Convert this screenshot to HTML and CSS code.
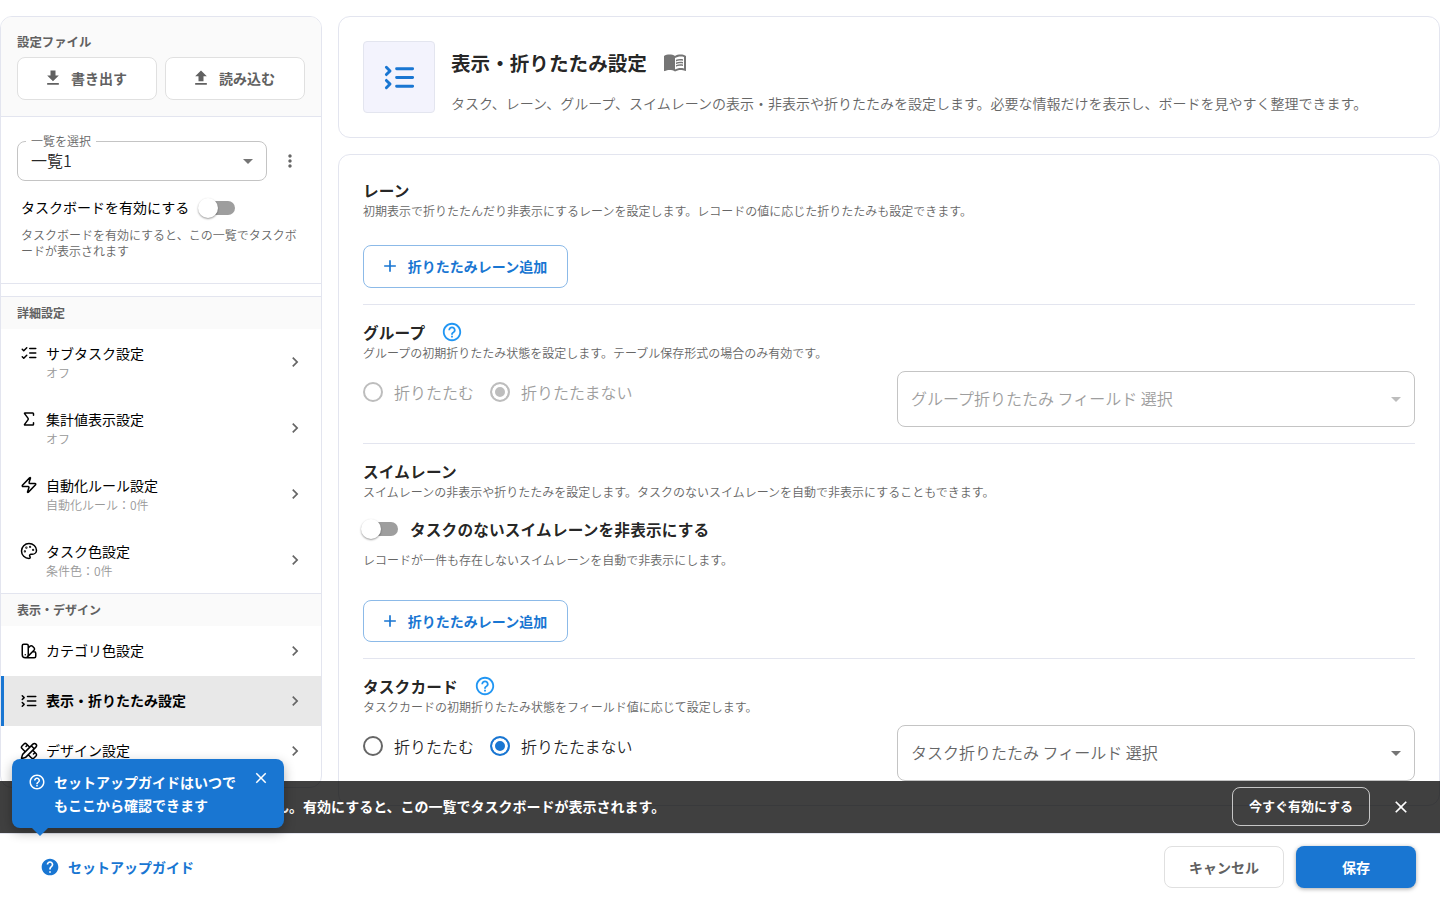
FILE: index.html
```html
<!DOCTYPE html>
<html lang="ja">
<head>
  <meta charset="UTF-8">
  <title>表示・折りたたみ設定</title>
  <link rel="stylesheet" href="styles.css">
</head>
<body>

<!-- Icons -->
<svg class="sprite" width="0" height="0">
  <symbol id="download" viewBox="0 0 24 24"><path d="M5 20h14v-2H5v2zM19 9h-4V3H9v6H5l7 7 7-7z"/></symbol>
  <symbol id="upload" viewBox="0 0 24 24"><path d="M5 20h14v-2H5zm0-10h4v6h6v-6h4l-7-7z"/></symbol>
  <symbol id="more" viewBox="0 0 24 24"><path d="M12 8c1.1 0 2-.9 2-2s-.9-2-2-2-2 .9-2 2 .9 2 2 2zm0 2c-1.1 0-2 .9-2 2s.9 2 2 2 2-.9 2-2-.9-2-2-2zm0 6c-1.1 0-2 .9-2 2s.9 2 2 2 2-.9 2-2-.9-2-2-2z"/></symbol>
  <symbol id="drop" viewBox="0 0 24 24"><path d="m7 10 5 5 5-5z"/></symbol>
  <symbol id="chevron" viewBox="0 0 24 24"><path d="M10 6 8.59 7.41 13.17 12l-4.58 4.59L10 18l6-6z"/></symbol>
  <symbol id="add" viewBox="0 0 24 24"><path d="M19 13h-6v6h-2v-6H5v-2h6V5h2v6h6z"/></symbol>
  <symbol id="close" viewBox="0 0 24 24"><path d="M19 6.41 17.59 5 12 10.59 6.41 5 5 6.41 10.59 12 5 17.59 6.41 19 12 13.41 17.59 19 19 17.59 13.41 12z"/></symbol>
  <symbol id="help-outline" viewBox="0 0 24 24"><path d="M11 18h2v-2h-2v2zm1-16C6.48 2 2 6.48 2 12s4.48 10 10 10 10-4.48 10-10S17.52 2 12 2zm0 18c-4.41 0-8-3.59-8-8s3.59-8 8-8 8 3.59 8 8-3.59 8-8 8zm0-14c-2.21 0-4 1.79-4 4h2c0-1.1.9-2 2-2s2 .9 2 2c0 2-3 1.75-3 5h2c0-2.25 3-2.5 3-5 0-2.21-1.79-4-4-4z"/></symbol>
  <symbol id="help" viewBox="0 0 24 24"><path d="M12 2C6.48 2 2 6.48 2 12s4.48 10 10 10 10-4.48 10-10S17.52 2 12 2zm1 17h-2v-2h2v2zm2.07-7.75l-.9.92C13.45 12.9 13 13.5 13 15h-2v-.5c0-1.1.45-2.1 1.17-2.83l1.24-1.26c.37-.36.59-.86.59-1.41 0-1.1-.9-2-2-2s-2 .9-2 2H8c0-2.21 1.79-4 4-4s4 1.79 4 4c0 .88-.36 1.68-.93 2.25z"/></symbol>
  <symbol id="book" viewBox="0 0 24 24">
    <path d="M21 5c-1.11-.35-2.33-.5-3.5-.5-1.95 0-4.05.4-5.5 1.5-1.45-1.1-3.55-1.5-5.5-1.5S2.45 4.9 1 6v14.65c0 .25.25.5.5.5.1 0 .15-.05.25-.05C3.1 20.45 5.05 20 6.5 20c1.95 0 4.05.4 5.5 1.5 1.35-.85 3.8-1.5 5.5-1.5 1.65 0 3.35.3 4.75 1.05.1.05.15.05.25.05.25 0 .5-.25.5-.5V6c-.6-.45-1.25-.75-2-1zm0 13.5c-1.1-.35-2.3-.5-3.5-.5-1.7 0-4.15.65-5.5 1.5V8c1.35-.85 3.8-1.5 5.5-1.5 1.2 0 2.4.15 3.5.5v11.5z"/>
    <path d="M17.5 10.5c.88 0 1.73.09 2.5.26V9.24c-.79-.15-1.64-.24-2.5-.24-1.7 0-3.24.29-4.5.83v1.66c1.13-.64 2.7-.99 4.5-.99zM13 12.49v1.66c1.13-.64 2.7-.99 4.5-.99.88 0 1.73.09 2.5.26V11.9c-.79-.15-1.64-.24-2.5-.24-1.7 0-3.24.3-4.5.83zM17.5 14.33c-1.7 0-3.24.29-4.5.83v1.66c1.13-.64 2.7-.99 4.5-.99.88 0 1.73.09 2.5.26v-1.52c-.79-.16-1.64-.24-2.5-.24z"/>
  </symbol>
  <symbol id="list-checks" viewBox="0 0 24 24"><path d="m3 17 2 2 4-4M3 7l2 2 4-4M13 6h8M13 12h8M13 18h8"/></symbol>
  <symbol id="sigma" viewBox="0 0 24 24"><path d="M18 7V5a1 1 0 0 0-1-1H6.5a.5.5 0 0 0-.4.8l4.5 6a2 2 0 0 1 0 2.4l-4.5 6a.5.5 0 0 0 .4.8H17a1 1 0 0 0 1-1v-2"/></symbol>
  <symbol id="zap" viewBox="0 0 24 24"><path d="M4 14a1 1 0 0 1-.78-1.63l9.9-10.2a.5.5 0 0 1 .86.46l-1.92 6.02A1 1 0 0 0 13 10h7a1 1 0 0 1 .78 1.63l-9.9 10.2a.5.5 0 0 1-.86-.46l1.92-6.02A1 1 0 0 0 11 14z"/></symbol>
  <symbol id="palette" viewBox="0 0 24 24">
    <circle cx="13.5" cy="6.5" r=".5"/><circle cx="17.5" cy="10.5" r=".5"/><circle cx="8.5" cy="7.5" r=".5"/><circle cx="6.5" cy="12.5" r=".5"/>
    <path d="M12 2C6.5 2 2 6.5 2 12s4.5 10 10 10c.926 0 1.648-.746 1.648-1.688 0-.437-.18-.835-.437-1.125-.29-.289-.438-.652-.438-1.125a1.64 1.64 0 0 1 1.668-1.668h1.996c3.051 0 5.555-2.503 5.555-5.554C21.965 6.012 17.461 2 12 2z"/>
  </symbol>
  <symbol id="swatch" viewBox="0 0 24 24"><path d="M11 17a4 4 0 0 1-8 0V5a2 2 0 0 1 2-2h4a2 2 0 0 1 2 2ZM16.7 13H19a2 2 0 0 1 2 2v4a2 2 0 0 1-2 2H7M7 17h.01M11 8l2.3-2.3a2.4 2.4 0 0 1 3.404.004L18.6 7.6a2.4 2.4 0 0 1 .026 3.434L9.9 19.8"/></symbol>
  <symbol id="list-collapse" viewBox="0 0 24 24"><path d="m3 10 2.5-2.5L3 5M3 19l2.5-2.5L3 14M10 6h11M10 12h11M10 18h11"/></symbol>
  <symbol id="pencil-ruler" viewBox="0 0 24 24"><path d="M13 7 8.7 2.7a2.41 2.41 0 0 0-3.4 0L2.7 5.3a2.41 2.41 0 0 0 0 3.4L7 13M8 6l2-2M18 16l2-2M17 11l4.3 4.3c.94.94.94 2.46 0 3.4l-2.6 2.6c-.94.94-2.46.94-3.4 0L11 17M21.174 6.812a1 1 0 0 0-3.986-3.987L3.842 16.174a2 2 0 0 0-.5.83l-1.321 4.352a.5.5 0 0 0 .623.622l4.353-1.32a2 2 0 0 0 .83-.497zM15 5l4 4"/></symbol>
</svg>

<div class="layout">
  <aside class="sidebar">
    <div class="file-box">
      <div class="file-label">設定ファイル</div>
      <div class="file-buttons">
        <button class="btn btn-gray btn-icon"><svg class="icon s20"><use href="#download"/></svg>書き出す</button>
        <button class="btn btn-gray btn-icon"><svg class="icon s20"><use href="#upload"/></svg>読み込む</button>
      </div>
    </div>

    <div class="view-box">
      <div class="view-row">
        <div class="select select-small">
          <span class="select-label">一覧を選択</span>
          <span class="select-value">一覧1</span>
          <svg class="icon s24"><use href="#drop"/></svg>
        </div>
        <svg class="icon s20 more"><use href="#more"/></svg>
      </div>
      <div class="enable-row">
        <span class="enable-label">タスクボードを有効にする</span>
        <span class="switch"></span>
      </div>
      <p class="enable-note">タスクボードを有効にすると、この一覧でタスクボードが表示されます</p>
    </div>

    <nav>
      <div class="nav-title">詳細設定</div>
      <a class="nav-item tall">
        <svg class="line s18"><use href="#list-checks"/></svg>
        <div class="nav-text">サブタスク設定<small>オフ</small></div>
        <svg class="icon s20"><use href="#chevron"/></svg>
      </a>
      <a class="nav-item tall">
        <svg class="line s18"><use href="#sigma"/></svg>
        <div class="nav-text">集計値表示設定<small>オフ</small></div>
        <svg class="icon s20"><use href="#chevron"/></svg>
      </a>
      <a class="nav-item tall">
        <svg class="line s18"><use href="#zap"/></svg>
        <div class="nav-text">自動化ルール設定<small>自動化ルール：0件</small></div>
        <svg class="icon s20"><use href="#chevron"/></svg>
      </a>
      <a class="nav-item tall">
        <svg class="line s18"><use href="#palette"/></svg>
        <div class="nav-text">タスク色設定<small>条件色：0件</small></div>
        <svg class="icon s20"><use href="#chevron"/></svg>
      </a>
      <div class="nav-title">表示・デザイン</div>
      <a class="nav-item">
        <svg class="line s18"><use href="#swatch"/></svg>
        <div class="nav-text">カテゴリ色設定</div>
        <svg class="icon s20"><use href="#chevron"/></svg>
      </a>
      <a class="nav-item active">
        <svg class="line s18"><use href="#list-collapse"/></svg>
        <div class="nav-text">表示・折りたたみ設定</div>
        <svg class="icon s20"><use href="#chevron"/></svg>
      </a>
      <a class="nav-item">
        <svg class="line s18"><use href="#pencil-ruler"/></svg>
        <div class="nav-text">デザイン設定</div>
        <svg class="icon s20"><use href="#chevron"/></svg>
      </a>
    </nav>
  </aside>

  <main class="main">
    <header class="card page-header">
      <div class="header-icon"><svg class="line"><use href="#list-collapse"/></svg></div>
      <div>
        <h1>表示・折りたたみ設定<svg class="icon s24"><use href="#book"/></svg></h1>
        <p>タスク、レーン、グループ、スイムレーンの表示・非表示や折りたたみを設定します。必要な情報だけを表示し、ボードを見やすく整理できます。</p>
      </div>
    </header>

    <div class="card settings">
      <section>
        <h2>レーン</h2>
        <p class="desc">初期表示で折りたたんだり非表示にするレーンを設定します。レコードの値に応じた折りたたみも設定できます。</p>
        <button class="btn btn-blue btn-icon first"><svg class="icon s20"><use href="#add"/></svg>折りたたみレーン追加</button>
      </section>

      <section>
        <h2>グループ<svg class="icon s22"><use href="#help-outline"/></svg></h2>
        <p class="desc">グループの初期折りたたみ状態を設定します。テーブル保存形式の場合のみ有効です。</p>
        <div class="fields disabled">
          <div class="radios">
            <span class="radio"></span>折りたたむ
            <span class="radio checked"></span>折りたたまない
          </div>
          <div class="select">
            <span class="select-value">グループ折りたたみ フィールド 選択</span>
            <svg class="icon s24"><use href="#drop"/></svg>
          </div>
        </div>
      </section>

      <section>
        <h2>スイムレーン</h2>
        <p class="desc">スイムレーンの非表示や折りたたみを設定します。タスクのないスイムレーンを自動で非表示にすることもできます。</p>
        <div class="hide-row"><span class="switch"></span>タスクのないスイムレーンを非表示にする</div>
        <p class="desc hide-note">レコードが一件も存在しないスイムレーンを自動で非表示にします。</p>
        <button class="btn btn-blue btn-icon"><svg class="icon s20"><use href="#add"/></svg>折りたたみレーン追加</button>
      </section>

      <section>
        <h2>タスクカード<svg class="icon s22"><use href="#help-outline"/></svg></h2>
        <p class="desc">タスクカードの初期折りたたみ状態をフィールド値に応じて設定します。</p>
        <div class="fields">
          <div class="radios">
            <span class="radio"></span>折りたたむ
            <span class="radio checked"></span>折りたたまない
          </div>
          <div class="select">
            <span class="select-value">タスク折りたたみ フィールド 選択</span>
            <svg class="icon s24"><use href="#drop"/></svg>
          </div>
        </div>
      </section>
    </div>
  </main>
</div>

<div class="bottom">
  <div class="notice">
    <span>ん。有効にすると、この一覧でタスクボードが表示されます。</span>
    <button class="btn btn-notice">今すぐ有効にする</button>
    <svg class="icon s20"><use href="#close"/></svg>
  </div>
  <footer class="footer">
    <a class="guide"><svg class="icon s20"><use href="#help"/></svg>セットアップガイド</a>
    <button class="btn btn-gray btn-wide">キャンセル</button>
    <button class="btn btn-save btn-wide">保存</button>
  </footer>
  <div class="tooltip">
    <svg class="icon s18"><use href="#help-outline"/></svg>
    <p>セットアップガイドはいつでもここから確認できます</p>
    <svg class="icon s18 tooltip-close"><use href="#close"/></svg>
  </div>
</div>

</body>
</html>
```

FILE: styles.css
```css
* {
  box-sizing: border-box;
}
body {
  margin: 0;
  height: 900px;
  overflow: hidden;
  background: #fff;
  color: rgba(0, 0, 0, 0.87);
  font-family: "Noto Sans CJK JP", sans-serif;
  font-size: 14px;
}
h1, h2, p {
  margin: 0;
}
.sprite {
  position: absolute;
}
.icon {
  fill: currentColor;
  flex: none;
}
.line {
  fill: none;
  stroke: currentColor;
  stroke-width: 2;
  stroke-linecap: round;
  stroke-linejoin: round;
  flex: none;
}
.s18 { width: 18px; height: 18px; }
.s20 { width: 20px; height: 20px; }
.s22 { width: 22px; height: 22px; }
.s24 { width: 24px; height: 24px; }

.layout {
  display: flex;
  align-items: flex-start;
  gap: 16px;
  padding-top: 16px;
}

/* buttons */
.btn {
  display: flex;
  align-items: center;
  justify-content: center;
  gap: 8px;
  height: 43px;
  padding: 0;
  border: 1px solid #e0e0e0;
  border-radius: 8px;
  background: #fff;
  font-family: inherit;
  font-size: 14px;
  font-weight: 700;
}
.btn-icon {
  padding: 0 4px 2px 0;
}
.btn-gray {
  color: #616161;
}
.btn-blue {
  width: 205px;
  border-color: #8cbae8;
  color: #1976d2;
}
.btn-wide {
  width: 120px;
  height: 42px;
}
.btn-save {
  border: none;
  background: #1976d2;
  color: #fff;
  box-shadow: 0 1px 4px rgba(0, 0, 0, 0.35);
}
.btn-notice {
  width: 138px;
  height: 39px;
  margin-bottom: 1px;
  padding-bottom: 2px;
  border-color: rgba(255, 255, 255, 0.7);
  background: none;
  color: #fff;
  font-size: 13px;
}

/* switch */
.switch {
  position: relative;
  width: 34px;
  height: 14px;
  border-radius: 7px;
  background: #9e9e9e;
}
.switch::before {
  content: "";
  position: absolute;
  left: -3px;
  top: -3px;
  width: 20px;
  height: 20px;
  border-radius: 50%;
  background: #fff;
  box-shadow: 0 1px 2px rgba(0, 0, 0, 0.4);
}

/* select */
.select {
  position: relative;
  display: flex;
  align-items: center;
  justify-content: space-between;
  width: 518px;
  height: 56px;
  padding: 0 6px 0 13px;
  border: 1px solid #c4c4c4;
  border-radius: 8px;
  color: #666;
  font-size: 16px;
  font-weight: 350;
}
.select .icon {
  color: #757575;
}
.select-value {
  padding-bottom: 2px;
}
.select-small {
  width: 250px;
  height: 40px;
  color: rgba(0, 0, 0, 0.87);
}
.select-label {
  position: absolute;
  left: 8px;
  top: -10px;
  padding: 0 5px;
  background: #fff;
  color: #666;
  font-size: 12px;
  line-height: 18px;
}

/* sidebar */
.sidebar {
  width: 322px;
  height: 772px;
  border: 1px solid #e3e5ef;
  border-radius: 12px;
  overflow: hidden;
}
.file-box {
  height: 100px;
  padding: 16px 16px 0;
  border-bottom: 1px solid #e3e5ef;
  background: #fafafa;
}
.file-label {
  margin-bottom: 6px;
  color: #616161;
  font-size: 12.4px;
  font-weight: 700;
  line-height: 18px;
}
.file-buttons {
  display: flex;
  gap: 8px;
}
.file-buttons .btn {
  width: 140px;
}
.view-box {
  height: 167px;
  margin-bottom: 12px;
  padding: 24px 16px 0;
  border-bottom: 1px solid #e3e5ef;
}
.view-row {
  display: flex;
  align-items: center;
  gap: 13px;
}
.more {
  color: #666;
}
.enable-row {
  display: flex;
  align-items: center;
  gap: 12px;
  height: 20px;
  margin: 17px 4px 9px;
  color: #000;
}
.enable-label {
  padding-bottom: 2px;
}
.enable-note {
  margin: 0 4px;
  color: #666;
  font-size: 12px;
  font-weight: 350;
  line-height: 16px;
}
.nav-title {
  height: 33px;
  padding-left: 16px;
  border-top: 1px solid #e3e5ef;
  background: #fafafa;
  color: #616161;
  font-size: 12px;
  font-weight: 700;
  line-height: 32px;
}
.nav-item {
  display: flex;
  align-items: center;
  height: 50px;
  padding: 0 16px 0 19px;
  color: #000;
}
.nav-text {
  flex: 1;
  margin-left: 8px;
  padding-bottom: 2px;
  line-height: 20px;
}
.nav-text small {
  display: block;
  color: #999;
  font-size: 12px;
  font-weight: 350;
}
.nav-item .icon {
  color: #666;
}
.tall {
  height: 66px;
}
.tall .line {
  margin-bottom: 18px;
}
.tall .nav-text {
  padding: 2px 0 0;
}
.nav-item.active {
  padding-left: 16px;
  border-left: 3px solid #1976d2;
  background: #e8e8e8;
  font-weight: 700;
}

/* main */
.main {
  flex: 1;
}
.card {
  border: 1px solid #e3e5ef;
  border-radius: 12px;
  padding: 24px;
}
.page-header {
  display: flex;
  gap: 16px;
  height: 122px;
  margin-bottom: 16px;
}
.header-icon {
  display: flex;
  align-items: center;
  justify-content: center;
  width: 72px;
  height: 72px;
  padding-left: 1px;
  border: 1px solid #e3e5ef;
  border-radius: 4px;
  background: #f3f3fd;
  color: #1976d2;
}
.header-icon .line {
  width: 35px;
  height: 35px;
}
h1 {
  display: flex;
  align-items: center;
  gap: 16px;
  height: 42px;
  font-size: 19.6px;
}
h1 .icon {
  color: #757575;
}
.page-header p {
  margin-top: 10px;
  color: #666;
  font-weight: 350;
  line-height: 20px;
}
.settings {
  height: 652px;
}
section + section {
  margin-top: 16px;
  padding-top: 16px;
  border-top: 1px solid #e3e5ef;
}
h2 {
  display: flex;
  align-items: center;
  gap: 16px;
  height: 22px;
  font-size: 15.68px;
  letter-spacing: 0.13px;
}
h2 .icon {
  color: #2196f3;
}
.desc {
  color: #666;
  font-size: 12px;
  font-weight: 350;
  line-height: 20px;
}
.first {
  margin-top: 24px;
}
.fields {
  display: flex;
  justify-content: space-between;
  margin-top: 8px;
}
.radios {
  display: flex;
  align-items: center;
  height: 42px;
  font-size: 16px;
  font-weight: 350;
}
.radio {
  width: 20px;
  height: 20px;
  margin-right: 11px;
  border: 2px solid #666;
  border-radius: 50%;
}
.radio.checked {
  margin-left: 16px;
  border-color: #1976d2;
  background: #1976d2;
  box-shadow: inset 0 0 0 3px #fff;
}
.disabled .radio {
  border-color: #bdbdbd;
}
.disabled .checked {
  background: #bdbdbd;
}
.disabled .radios,
.disabled .select {
  color: #9e9e9e;
}
.disabled .select .icon {
  color: #bdbdbd;
}
.hide-row {
  display: flex;
  align-items: center;
  gap: 12px;
  height: 24px;
  margin-top: 15px;
  padding-left: 1px;
  font-size: 15.68px;
  font-weight: 700;
  letter-spacing: 0.13px;
}
.hide-note {
  margin: 9px 0 30px;
}
section:nth-child(3) .btn {
  height: 42px;
  padding-bottom: 0;
}

/* bottom bars */
.bottom {
  position: absolute;
  left: 0;
  right: 0;
  bottom: 0;
}
.notice {
  display: flex;
  align-items: center;
  height: 52px;
  padding: 0 29px 0 275px;
  background: rgba(0, 0, 0, 0.75);
  color: #fff;
  font-weight: 700;
}
.notice span {
  flex: 1;
  padding-bottom: 2px;
}
.notice > .icon {
  margin-left: 21px;
}
.footer {
  display: flex;
  align-items: center;
  gap: 12px;
  height: 67px;
  padding: 0 24px 0 40px;
  border-top: 1px solid #e3e5ef;
  background: #fff;
}
.guide {
  display: flex;
  flex: 1;
  align-items: center;
  gap: 8px;
  color: #1976d2;
  font-weight: 700;
}
.tooltip {
  position: absolute;
  left: 12px;
  bottom: 72px;
  display: flex;
  width: 272px;
  height: 69px;
  padding: 12px 14px 0 16px;
  border-radius: 8px;
  background: #1976d2;
  box-shadow: 0 4px 12px rgba(0, 0, 0, 0.3);
  color: #fff;
  font-weight: 700;
}
.tooltip > .icon {
  margin-top: 2px;
}
.tooltip p {
  width: 188px;
  margin: 0 11px 0 8px;
  line-height: 23px;
}
.tooltip .tooltip-close {
  margin-top: -2px;
}
.tooltip::after {
  content: "";
  position: absolute;
  left: 20px;
  top: 69px;
  border: 8px solid transparent;
  border-top-color: #1976d2;
  border-bottom: none;
}
```
